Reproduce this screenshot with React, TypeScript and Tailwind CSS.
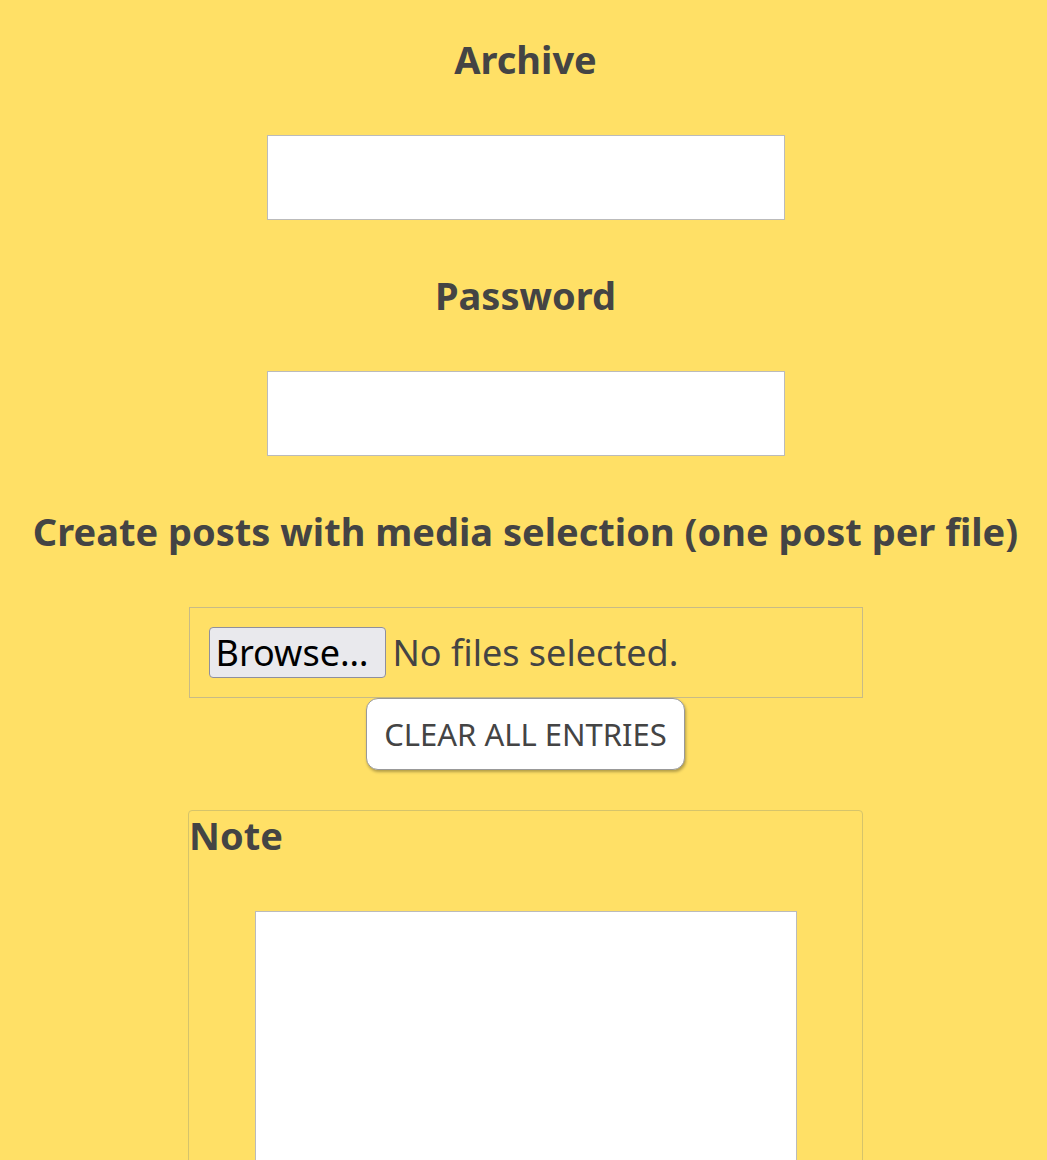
import React from 'react';

const font = { fontFamily: '"Noto Sans", "Open Sans", sans-serif' };

const Heading: React.FC<{ children: React.ReactNode }> = ({ children }) => (
    <h2 className="text-[38px] font-bold text-[#444] leading-[48px] text-center">{children}</h2>
);

export default function App() {
    return (
        <div className="min-h-[1160px] bg-[#ffe066] flex flex-col items-center pl-[4px] text-[#444]" style={font}>
            <div className="mt-[35px]">
                <Heading>Archive</Heading>
            </div>
            <input type="text" className="mt-[52px] w-[518px] h-[85px] bg-white border border-[#bbb]" />
            <div className="mt-[51px]">
                <Heading>Password</Heading>
            </div>
            <input type="password" className="mt-[52px] w-[518px] h-[85px] bg-white border border-[#bbb]" />
            <div className="mt-[51px]">
                <Heading>Create posts with media selection (one post per file)</Heading>
            </div>
            <div className="mt-[52px] w-[674px] h-[91px] border border-[#c8bb86] flex items-center pl-[19px]">
                <button className="w-[177px] h-[51px] pl-[6px] text-left bg-[#e9e9ed] border border-[#8f8f9d] rounded-[4px] text-[36px] text-black leading-none">
                    Browse…
                </button>
                <span className="ml-[7px] text-[36px] text-[#444]">No files selected.</span>
            </div>
            <button className="w-[319px] h-[72px] bg-white border border-[#999] rounded-[12px] shadow-[1px_2px_3px_rgba(0,0,0,0.3)] text-[31px] text-[#444]">
                CLEAR ALL ENTRIES
            </button>
            <fieldset className="mt-[40px] w-[675px] h-[400px] border border-[#d6c46a] rounded-[4px] flex flex-col">
                <h3 className="text-[38px] font-bold leading-[48px] text-[#444]">Note</h3>
                <textarea className="mt-[52px] ml-[66px] w-[542px] h-[300px] bg-white border border-[#bbb] resize-none" />
            </fieldset>
        </div>
    );
}
